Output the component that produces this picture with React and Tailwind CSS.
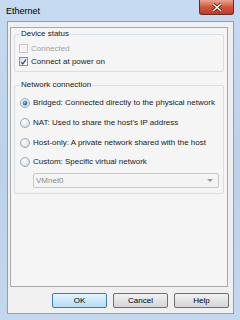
import React from "react";

const font = { fontFamily: '"Liberation Sans", Arial, sans-serif' };

function Radio({ checked }) {
  return (
    <svg width="10" height="10" viewBox="0 0 10 10" className="shrink-0">
      <defs>
        <radialGradient id={checked ? "rgc" : "rgu"} cx="0.4" cy="0.35" r="0.7">
          <stop offset="0" stopColor="#ffffff" />
          <stop offset="1" stopColor="#d4d8dc" />
        </radialGradient>
        <radialGradient id="dot" cx="0.4" cy="0.35" r="0.7">
          <stop offset="0" stopColor="#8fc3f0" />
          <stop offset="1" stopColor="#1c4f8c" />
        </radialGradient>
      </defs>
      <circle cx="5" cy="5" r="4.5" fill={`url(#${checked ? "rgc" : "rgu"})`} stroke="#8a9aa8" strokeWidth="0.8" />
      {checked && <circle cx="5" cy="5" r="2.4" fill="url(#dot)" />}
    </svg>
  );
}

function Check({ checked, disabled }) {
  return (
    <div
      className={`w-[9px] h-[9px] shrink-0 border flex items-center justify-center ${
        disabled ? "border-[#c6c6c6] bg-[#f4f4f4]" : "border-[#8e8f8f] bg-gradient-to-br from-[#dcdcdc] to-[#ffffff]"
      }`}
    >
      {checked && (
        <svg width="8" height="8" viewBox="0 0 8 8">
          <path d="M1.3 4.2 L3.1 6.2 L6.8 1.2" fill="none" stroke="#2a4e8c" strokeWidth="1.4" />
        </svg>
      )}
    </div>
  );
}

function Button({ children, def }) {
  return (
    <div
      className={`w-[55px] h-[15px] rounded-[2px] border flex items-center justify-center text-[8px] text-black ${
        def
          ? "border-[#3c7fb1] bg-gradient-to-b from-[#e5f4fc] to-[#b3dcf2]"
          : "border-[#707070] bg-gradient-to-b from-[#f2f2f2] to-[#d5d5d5]"
      }`}
    >
      {children}
    </div>
  );
}

export default function App() {
  return (
    <div
      style={font}
      className="w-[240px] h-[320px] overflow-hidden bg-gradient-to-b from-[#c6dbf1] via-[#bcd2ea] to-[#c3d7ee] relative text-[8px] leading-[10px] text-[#1a1a1a] whitespace-nowrap"
    >
      {/* title bar */}
      <div className="h-[21px] flex items-center pl-[6px] text-[9px] text-black">Ethernet</div>
      {/* close button */}
      <div className="absolute left-[199px] top-0 w-[35px] h-[15px] rounded-b-[3px] border border-t-0 border-[#6b2b20] bg-gradient-to-b from-[#e8a493] via-[#d0563d] to-[#c13b22] flex items-center justify-center">
        <svg width="12" height="9" viewBox="0 0 12 9">
          <path d="M2 1 L10 8 M10 1 L2 8" stroke="#4a1a12" strokeWidth="3" />
          <path d="M2 1 L10 8 M10 1 L2 8" stroke="#ffffff" strokeWidth="1.6" />
        </svg>
      </div>
      {/* content */}
      <div className="ml-[7px] w-[227px] h-[293px] border border-[#8ba0ba] bg-[#f0f0f0] flex flex-col">
        <div className="ml-[2px] mt-[5px] w-[218px] h-[260px] border border-[#a9a9a9] bg-[#f5f5f5] pl-[3px] pt-[1px]">
          <fieldset className="w-[210px] h-[43px] border border-[#d5dfe5] rounded-[2px] pl-[4px]">
            <legend className="px-[1px] ml-[1px] leading-[10px]">Device status</legend>
            <div className="flex items-center gap-[3px] h-[13px] mt-[3px] text-[#a0a0a0]">
              <Check disabled />
              <span>Connected</span>
            </div>
            <div className="flex items-center gap-[3px] h-[13px]">
              <Check checked />
              <span>Connect at power on</span>
            </div>
          </fieldset>
          <fieldset className="w-[210px] h-[114px] mt-[8px] border border-[#d5dfe5] rounded-[2px] pl-[5px]">
            <legend className="px-[1px] ml-[0px] leading-[10px]">Network connection</legend>
            <div className="flex items-center gap-[3px] h-[20px] mt-[3px]">
              <Radio checked />
              <span>Bridged: Connected directly to the physical network</span>
            </div>
            <div className="flex items-center gap-[3px] h-[20px]">
              <Radio />
              <span>NAT: Used to share the host's IP address</span>
            </div>
            <div className="flex items-center gap-[3px] h-[19px]">
              <Radio />
              <span>Host-only: A private network shared with the host</span>
            </div>
            <div className="flex items-center gap-[3px] h-[19px]">
              <Radio />
              <span>Custom: Specific virtual network</span>
            </div>
            <div className="ml-[13px] mt-[2px] w-[186px] h-[15px] rounded-[2px] border border-[#c8c8c8] bg-[#f4f4f4] flex items-center justify-between pl-[2px] pr-[5px] text-[#8d8d8d]">
              <span>VMnet0</span>
              <svg width="6" height="3" viewBox="0 0 6 3">
                <path d="M0 0 L6 0 L3 3 Z" fill="#9a9a9a" />
              </svg>
            </div>
          </fieldset>
        </div>
        <div className="flex justify-end gap-[6px] mt-[6px] pr-[4px]">
          <Button def>OK</Button>
          <Button>Cancel</Button>
          <Button>Help</Button>
        </div>
      </div>
    </div>
  );
}
